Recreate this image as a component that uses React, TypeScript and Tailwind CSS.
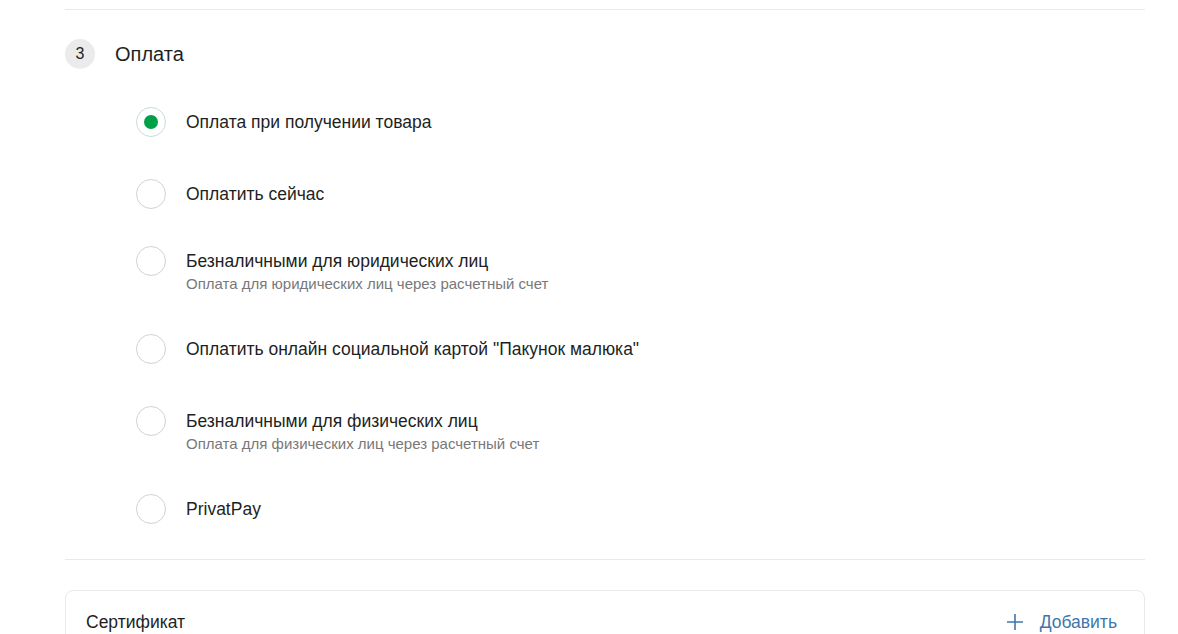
import React from "react";

type Opt = { title: string; sub?: string; selected?: boolean; mt: string };

const options: Opt[] = [
  { title: "Оплата при получении товара", selected: true, mt: "mt-0" },
  { title: "Оплатить сейчас", mt: "mt-[42px]" },
  { title: "Безналичными для юридических лиц", sub: "Оплата для юридических лиц через расчетный счет", mt: "mt-[37px]" },
  { title: "Оплатить онлайн социальной картой \"Пакунок малюка\"", mt: "mt-[42px]" },
  { title: "Безналичными для физических лиц", sub: "Оплата для физических лиц через расчетный счет", mt: "mt-[42px]" },
  { title: "PrivatPay", mt: "mt-[42px]" },
];

function Radio({ selected }: { selected?: boolean }) {
  return (
    <div
      className={
        "w-[30px] h-[30px] rounded-full border flex items-center justify-center shrink-0 bg-white " +
        (selected ? "border-[#c9ddd2]" : "border-[#d2d2d2]")
      }
    >
      {selected && <div className="w-[14px] h-[14px] rounded-full bg-[#00a046]" />}
    </div>
  );
}

export default function App() {
  return (
    <div className="font-['Liberation_Sans',Arial,sans-serif] text-[#221f1f] bg-white h-[634px] overflow-hidden">
      <div className="ml-[65px] w-[1080px]">
        <div className="h-[9px]" />
        <div className="border-t border-[#e9e9e9]" />
        <div className="mt-[29px] flex items-center gap-[20px]">
          <div className="w-[30px] h-[30px] rounded-full bg-[#ebebeb] flex items-center justify-center text-[16px]">
            3
          </div>
          <span className="text-[20px] leading-[30px]">Оплата</span>
        </div>
        <div className="ml-[71px] mt-[38px] flex flex-col">
          {options.map((o) => (
            <div key={o.title} className={"flex items-start gap-[20px] " + o.mt}>
              <Radio selected={o.selected} />
              <div className="flex flex-col">
                <span className="text-[17.5px] leading-[30px]">{o.title}</span>
                {o.sub && (
                  <span className="text-[15px] leading-[16px] text-[#797878]">{o.sub}</span>
                )}
              </div>
            </div>
          ))}
        </div>
        <div className="mt-[35px] border-t border-[#e9e9e9]" />
        <div className="mt-[30px] border border-[#e9e9e9] rounded-[8px] h-[100px] pl-[20px] pr-[27px] pt-[19px] flex justify-between items-start">
          <span className="text-[17.5px] leading-[24px]">Сертификат</span>
          <button className="flex items-center gap-[16px] text-[#3e77aa] text-[17.5px] leading-[24px]">
            <svg width="18" height="18" viewBox="0 0 18 18" fill="none" stroke="#3e77aa" strokeWidth="1.6">
              <path d="M9 1v16M1 9h16" />
            </svg>
            Добавить
          </button>
        </div>
      </div>
    </div>
  );
}
